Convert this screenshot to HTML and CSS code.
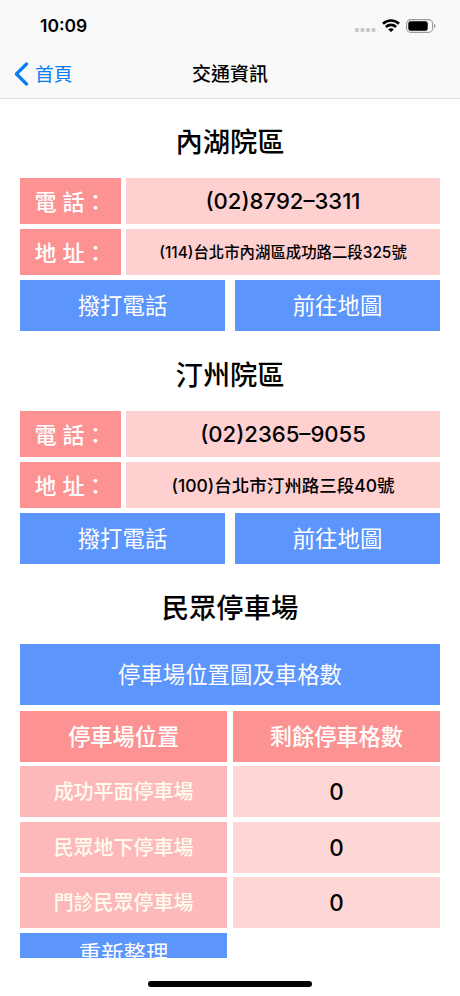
FILE: index.html
```
<!DOCTYPE html>
<html lang="zh-Hant">
<head>
    <meta charset="UTF-8">
    <meta name="viewport" content="width=device-width, initial-scale=1.0">
    <title>交通資訊</title>
    <link rel="stylesheet" href="styles.css">
</head>
<body>
    <header class="header">
        <div class="status-bar">
            <span class="time">10:09</span>
            <div class="status-icons">
                <svg class="signal" width="21" height="4" viewBox="0 0 21 4" fill="#c9c9c9">
                    <rect x="0" y="0" width="4" height="4" rx="1.3"/>
                    <rect x="5.5" y="0" width="4" height="4" rx="1.3"/>
                    <rect x="11" y="0" width="4" height="4" rx="1.3"/>
                    <rect x="16.5" y="0" width="4" height="4" rx="1.3"/>
                </svg>
                <svg class="wifi" width="18" height="13" viewBox="0 0 18 13" fill="none" stroke="#000" stroke-width="2.6">
                    <path d="M1 4.8 A11.5 11.5 0 0 1 17 4.8"/>
                    <path d="M3.9 8 A7.3 7.3 0 0 1 14.1 8"/>
                    <path d="M9 13 L6.2 10.5 A3.8 3.8 0 0 1 11.8 10.5 Z" fill="#000" stroke="none"/>
                </svg>
                <svg class="battery" width="30" height="14" viewBox="0 0 30 14">
                    <rect x="0.6" y="0.6" width="26" height="12.8" rx="4" fill="none" stroke="#9b9b9b" stroke-width="1.1"/>
                    <rect x="2.3" y="2.3" width="19.4" height="9.4" rx="2.2" fill="#000"/>
                    <path d="M28 4.7 Q29.6 5.4 29.6 7 Q29.6 8.6 28 9.3 Z" fill="#9b9b9b"/>
                </svg>
            </div>
        </div>
        <nav class="nav-bar">
            <a class="back" href="#">
                <svg width="15" height="24" viewBox="0 0 15 24" fill="none" stroke="#0a7df2" stroke-width="3.2" stroke-linecap="round" stroke-linejoin="round">
                    <path d="M12.5 2 L2.4 12 L12.5 22"/>
                </svg>
                <span class="back-text">首頁</span>
            </a>
            <h1 class="nav-title">交通資訊</h1>
        </nav>
    </header>

    <main class="content">
        <section class="branch">
            <h2 class="title">內湖院區</h2>
            <div class="info">
                <div class="label">電 話：</div>
                <div class="value phone">(02)8792–3311</div>
                <div class="label">地 址：</div>
                <div class="value address-small">(114)台北市內湖區成功路二段325號</div>
            </div>
            <div class="actions">
                <button class="btn">撥打電話</button>
                <button class="btn">前往地圖</button>
            </div>
        </section>

        <section class="branch">
            <h2 class="title">汀州院區</h2>
            <div class="info">
                <div class="label">電 話：</div>
                <div class="value phone">(02)2365–9055</div>
                <div class="label">地 址：</div>
                <div class="value address">(100)台北市汀州路三段40號</div>
            </div>
            <div class="actions">
                <button class="btn">撥打電話</button>
                <button class="btn">前往地圖</button>
            </div>
        </section>

        <section class="parking">
            <h2 class="title">民眾停車場</h2>
            <button class="btn btn-map">停車場位置圖及車格數</button>
            <div class="lots">
                <div class="lot-head">停車場位置</div>
                <div class="lot-head">剩餘停車格數</div>
                <div class="lot-name">成功平面停車場</div>
                <div class="lot-count">0</div>
                <div class="lot-name">民眾地下停車場</div>
                <div class="lot-count">0</div>
                <div class="lot-name">門診民眾停車場</div>
                <div class="lot-count">0</div>
                <button class="btn btn-refresh">重新整理</button>
            </div>
        </section>
    </main>

    <footer class="home-area">
        <div class="home-indicator"></div>
    </footer>
</body>
</html>
```
FILE: styles.css
```
* {
    box-sizing: border-box;
}
body {
    margin: 0;
    height: 996px;
    display: flex;
    flex-direction: column;
    overflow: hidden;
    background: #fff;
    color: #000;
    font-family: Inter, "Noto Sans CJK TC", sans-serif;
}
.header {
    flex: none;
    height: 99px;
    background: #f9f9f9;
    border-bottom: 1px solid #e0e0e0;
}
.status-bar {
    display: flex;
    justify-content: space-between;
    align-items: center;
    height: 50px;
    padding: 1px 24px 0 40px;
}
.time {
    font-size: 17.5px;
    font-weight: 600;
}
.status-icons {
    display: flex;
    align-items: center;
}
.signal {
    margin: 8px 6px 0 0;
}
.wifi {
    margin-right: 6px;
}
.nav-bar {
    display: grid;
    grid-template-columns: 1fr auto 1fr;
    align-items: center;
    height: 48px;
    padding: 0 14px;
}
.back {
    display: flex;
    align-items: center;
    gap: 6px;
    color: #0a7df2;
    font-size: 18.7px;
    text-decoration: none;
}
.back-text {
    padding-bottom: 4px;
}
.nav-title {
    margin: 0;
    padding-bottom: 4px;
    font-size: 19px;
    font-weight: 500;
}
.content {
    flex: none;
    height: 859px;
    padding: 0 20px;
    overflow: hidden;
}
.branch {
    height: 233.2px;
}
.title {
    display: flex;
    align-items: center;
    justify-content: center;
    height: 79px;
    margin: 0;
    padding-top: 3px;
    font-size: 27.3px;
    font-weight: 500;
}
.info {
    display: grid;
    grid-template-columns: 101px 1fr;
    grid-auto-rows: 45.6px;
    gap: 5.5px 5px;
}
.label,
.value,
.lot-head,
.lot-name,
.lot-count {
    display: flex;
    align-items: center;
    justify-content: center;
    padding-bottom: 2px;
    white-space: nowrap;
}
.label {
    background: #fd9292;
    color: #fff;
    font-size: 22px;
    font-weight: 500;
}
.value {
    background: #fed0d0;
}
.phone {
    padding-bottom: 0;
    font-size: 22.1px;
    font-weight: 450;
}
.address-small {
    font-size: 15.4px;
    font-weight: 450;
}
.address {
    font-size: 17.5px;
    font-weight: 450;
}
.actions {
    display: grid;
    grid-template-columns: 1fr 1fr;
    gap: 10px;
    margin-top: 5.5px;
}
.btn {
    height: 51px;
    padding: 0 0 3px;
    border: none;
    border-radius: 0;
    background: #5c95fb;
    color: #fff;
    font-family: inherit;
    font-size: 22.4px;
    font-weight: 400;
}
.btn-map {
    display: block;
    width: 100%;
    height: 61px;
}
.lots {
    display: grid;
    grid-template-columns: 1fr 1fr;
    grid-auto-rows: 51px;
    gap: 4.5px 5.5px;
    margin-top: 5.5px;
}
.lot-head {
    background: #fc9292;
    color: #fff;
    font-size: 22.2px;
    font-weight: 500;
}
.lot-name {
    background: #fdb8b9;
    color: #fffdf0;
    font-size: 20px;
    font-weight: 500;
}
.lot-count {
    padding-bottom: 0;
    background: #fed6d6;
    font-size: 22.4px;
    font-weight: 450;
}
.btn-refresh {
    height: 41px;
}
.home-area {
    display: flex;
    justify-content: center;
    padding-top: 23px;
}
.home-indicator {
    width: 164px;
    height: 6px;
    border-radius: 3px;
    background: #000;
}
```
